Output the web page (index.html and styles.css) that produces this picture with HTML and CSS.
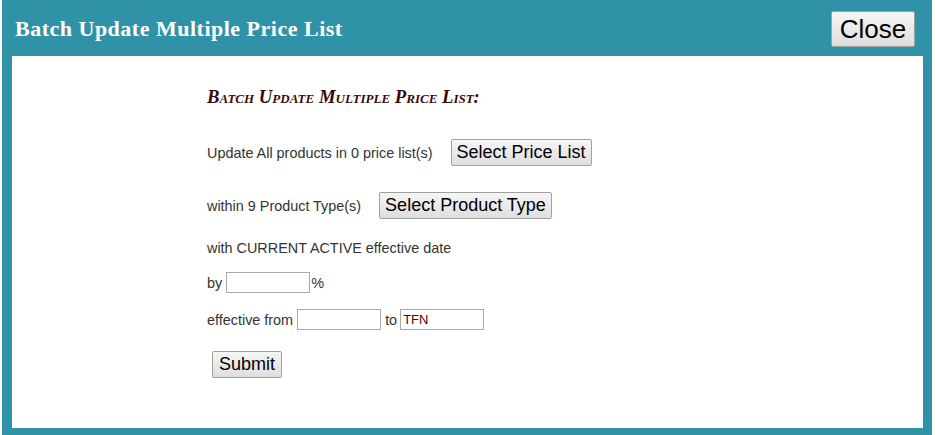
FILE: index.html
```html
<!DOCTYPE html>
<html>
<head>
<meta charset="utf-8">
<link rel="stylesheet" href="styles.css">
</head>
<body>
<div class="dialog">
  <div class="titlebar">
    <span class="title">Batch Update Multiple Price List</span>
    <button class="btn close">Close</button>
  </div>
  <div class="content">
    <div class="form">
      <h3 class="heading">Batch Update Multiple Price List:</h3>
      <div class="row r1"><span>Update All products in 0 price list(s)</span><button class="btn big">Select Price List</button></div>
      <div class="row r2"><span>within 9 Product Type(s)</span><button class="btn big">Select Product Type</button></div>
      <div class="row r3"><span>with CURRENT ACTIVE effective date</span></div>
      <div class="row r4"><span>by</span><input class="field pct" type="text"><span>%</span></div>
      <div class="row r5"><span>effective from</span><input class="field from" type="text"><span>to</span><input class="field tfn" type="text" value="TFN"></div>
      <div class="row r6"><button class="btn submit">Submit</button></div>
    </div>
  </div>
</div>
</body>
</html>
```

FILE: styles.css
```css
html, body { margin: 0; padding: 0; background: #fff; }
body { font-family: "Liberation Sans", Arial, sans-serif; }
.dialog {
  margin-left: 2px;
  width: 930px;
  height: 435px;
  background: #3092a6;
  box-sizing: border-box;
  padding: 0 9px 7px 10px;
  display: flex;
  flex-direction: column;
}
.titlebar {
  height: 56px;
  display: flex;
  align-items: center;
  justify-content: space-between;
  box-sizing: border-box;
  padding: 0 8px 0 3px;
}
.title {
  font-family: "Liberation Serif", "Times New Roman", serif;
  font-weight: bold;
  color: #fff;
  font-size: 22px;
  letter-spacing: 0.5px;
  padding-top: 2px;
}
.btn {
  font-family: "Liberation Sans", Arial, sans-serif;
  background: linear-gradient(#f6f6f6, #dedede);
  border: 1px solid #a0a0a0;
  border-radius: 2px;
  color: #000;
  padding: 0;
}
.close {
  font-size: 26px;
  width: 84px;
  height: 36px;
  margin-top: 2px;
}
.content {
  flex: 1;
  background: #fff;
}
.form {
  margin-left: 195px;
  font-size: 14.4px;
  color: #333;
}
.heading {
  margin: 0;
  padding-top: 30px;
  height: 58px;
  box-sizing: border-box;
  font-family: "Liberation Serif", "Times New Roman", serif;
  font-style: italic;
  font-weight: bold;
  font-variant: small-caps;
  font-size: 18.7px;
  color: #3a0a0a;
}
.row { display: flex; align-items: center; }
.big {
  font-size: 18px;
  height: 27px;
  margin-left: 18px;
  padding: 0 5px;
}
.r1 { height: 27px; margin-top: 25px; }
.r2 { height: 27px; margin-top: 26px; }
.r3 { margin-top: 20px; height: 18px; }
.r4 { margin-top: 15px; height: 21px; }
.r5 { margin-top: 16px; height: 21px; }
.r6 { margin-top: 21px; height: 27px; padding-left: 5px; }
.field {
  height: 21px;
  width: 84px;
  box-sizing: border-box;
  border: 1px solid #a9a9a9;
  margin: 0;
  padding: 1px 2px;
  font-family: "Liberation Sans", Arial, sans-serif;
  font-size: 13px;
  color: #5a0000;
}
.pct { margin: 0 1px 0 4px; }
.from { margin: 0 4px 0 4px; }
.tfn { margin-left: 3px; }
.submit {
  font-size: 18px;
  height: 27px;
  width: 70px;
}
```
